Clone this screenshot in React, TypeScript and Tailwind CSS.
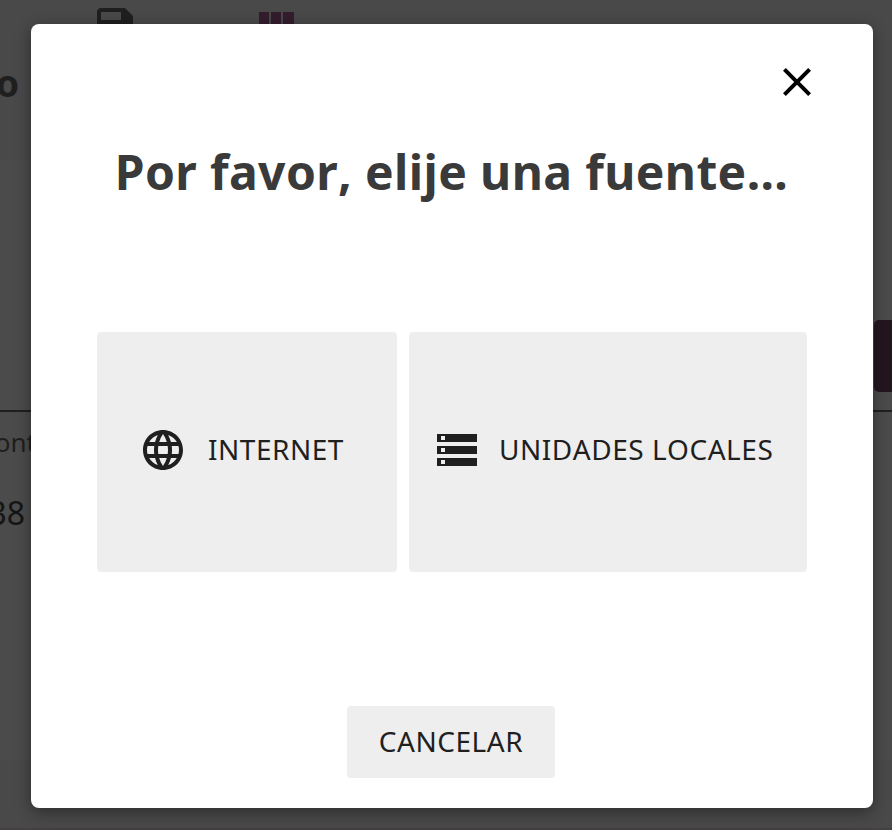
import React from "react";

function SaveIcon() {
  return (
    <svg className="ml-[91px] mt-[2px] h-12 w-12 shrink-0" viewBox="0 0 24 24" fill="#1f1f1f">
      <path d="M17 3H5c-1.11 0-2 .9-2 2v14c0 1.1.89 2 2 2h14c1.1 0 2-.9 2-2V7l-4-4zm-2 6H5V5h10v4z" />
    </svg>
  );
}

function Page() {
  return (
    <div className="h-full overflow-hidden bg-[#4b4b4b] text-[#1f1f1f]">
      <header className="h-40 bg-[#494949]">
        <div className="flex h-[58px]">
          <SaveIcon />
          <div className="ml-[120px] mt-3 flex h-8 gap-[2px]">
            <span className="w-[10px] bg-[#331d2c]" />
            <span className="w-[10px] bg-[#331d2c]" />
            <span className="w-[11px] bg-[#331d2c]" />
          </div>
        </div>
        <div className="flex w-[19px] justify-end text-[37px] font-bold leading-[50px]">o</div>
      </header>
      <div className="flex h-[250px] justify-end pt-40">
        <span className="h-[72px] w-[18px] rounded-l-[5px] bg-[#24161f]" />
      </div>
      <div className="border-t-2 border-[#1f1f1f]">
        <div className="flex h-[60px] w-[36px] items-center justify-end text-[26px]">cont</div>
        <div className="flex h-[82px] w-[25px] items-center justify-end text-[32px] text-[#151515]">38</div>
      </div>
      <div className="h-[206px]" />
      <div className="h-[68px] bg-[#494949]" />
      <div className="h-1 bg-[#443f43]" />
    </div>
  );
}

export default function App() {
  return (
    <div className="relative h-[830px] w-[892px] overflow-hidden font-['Noto_Sans',sans-serif]">
      <Page />
      <div className="absolute inset-0 pl-[31px] pt-6">
        <div className="flex h-[784px] w-[842px] flex-col items-center rounded-lg bg-white pt-[34px] shadow-[0_4px_16px_rgba(0,0,0,0.4)] [font-kerning:none]">
          <button className="mr-[52px] self-end">
            <svg className="h-12 w-12" viewBox="0 0 24 24" fill="#000">
              <path d="M19 6.41L17.59 5 12 10.59 6.41 5 5 6.41 10.59 12 5 17.59 6.41 19 12 13.41 17.59 19 19 17.59 13.41 12z" />
            </svg>
          </button>
          <h1 className="mr-[1px] mt-[34px] whitespace-nowrap text-[48px] font-bold leading-[64px] tracking-[0.38px] text-[#3a3a3a]">
            Por favor, elije una fuente...
          </h1>
          <div className="mt-32 flex w-[710px] gap-3">
            <button className="flex h-60 w-[300px] items-center rounded bg-[#eee] pb-1 pl-[42px] text-[28px] tracking-[0.52px] text-[#1f1f1f]">
              <svg className="h-12 w-12" viewBox="0 0 24 24" fill="currentColor">
                <path d="M11.99 2C6.47 2 2 6.48 2 12s4.47 10 9.99 10C17.52 22 22 17.52 22 12S17.52 2 11.99 2zm6.93 6h-2.95c-.32-1.25-.78-2.45-1.38-3.56 1.84.63 3.37 1.91 4.33 3.56zM12 4.04c.83 1.2 1.48 2.53 1.91 3.96h-3.82c.43-1.43 1.08-2.76 1.91-3.96zM4.26 14C4.1 13.36 4 12.69 4 12s.1-1.36.26-2h3.38c-.08.66-.14 1.32-.14 2 0 .68.06 1.34.14 2H4.26zm.82 2h2.95c.32 1.25.78 2.45 1.38 3.56-1.84-.63-3.37-1.9-4.33-3.56zm2.95-8H5.08c.96-1.66 2.49-2.93 4.33-3.56C8.81 5.55 8.35 6.75 8.03 8zM12 19.96c-.83-1.2-1.48-2.53-1.91-3.96h3.82c-.43 1.43-1.08 2.76-1.91 3.96zM14.34 14H9.66c-.09-.66-.16-1.32-.16-2 0-.68.07-1.35.16-2h4.68c.09.65.16 1.32.16 2 0 .68-.07 1.34-.16 2zm.25 5.56c.6-1.11 1.06-2.31 1.38-3.56h2.95c-.96 1.65-2.49 2.93-4.33 3.56zM16.36 14c.08-.66.14-1.32.14-2 0-.68-.06-1.34-.14-2h3.38c.16.64.26 1.31.26 2s-.1 1.36-.26 2h-3.38z" />
              </svg>
              <span className="ml-[21px] mt-[-2px] whitespace-nowrap">INTERNET</span>
            </button>
            <button className="flex h-60 w-[398px] items-center rounded bg-[#eee] pb-1 pl-6 text-[28px] tracking-[0.52px] text-[#1f1f1f]">
              <svg className="h-12 w-12" viewBox="0 0 24 24" fill="currentColor">
                <path d="M2 20h20v-4H2v4zm2-3h2v2H4v-2zM2 4v4h20V4H2zm4 3H4V5h2v2zm-4 7h20v-4H2v4zm2-3h2v2H4v-2z" />
              </svg>
              <span className="ml-[18px] mt-[-2px] whitespace-nowrap">UNIDADES LOCALES</span>
            </button>
          </div>
          <button className="mr-[2px] mt-[134px] h-[72px] w-[208px] rounded bg-[#eee] pb-[2px] text-[28px] tracking-[0.52px] text-[#1f1f1f]">
            CANCELAR
          </button>
        </div>
      </div>
    </div>
  );
}
